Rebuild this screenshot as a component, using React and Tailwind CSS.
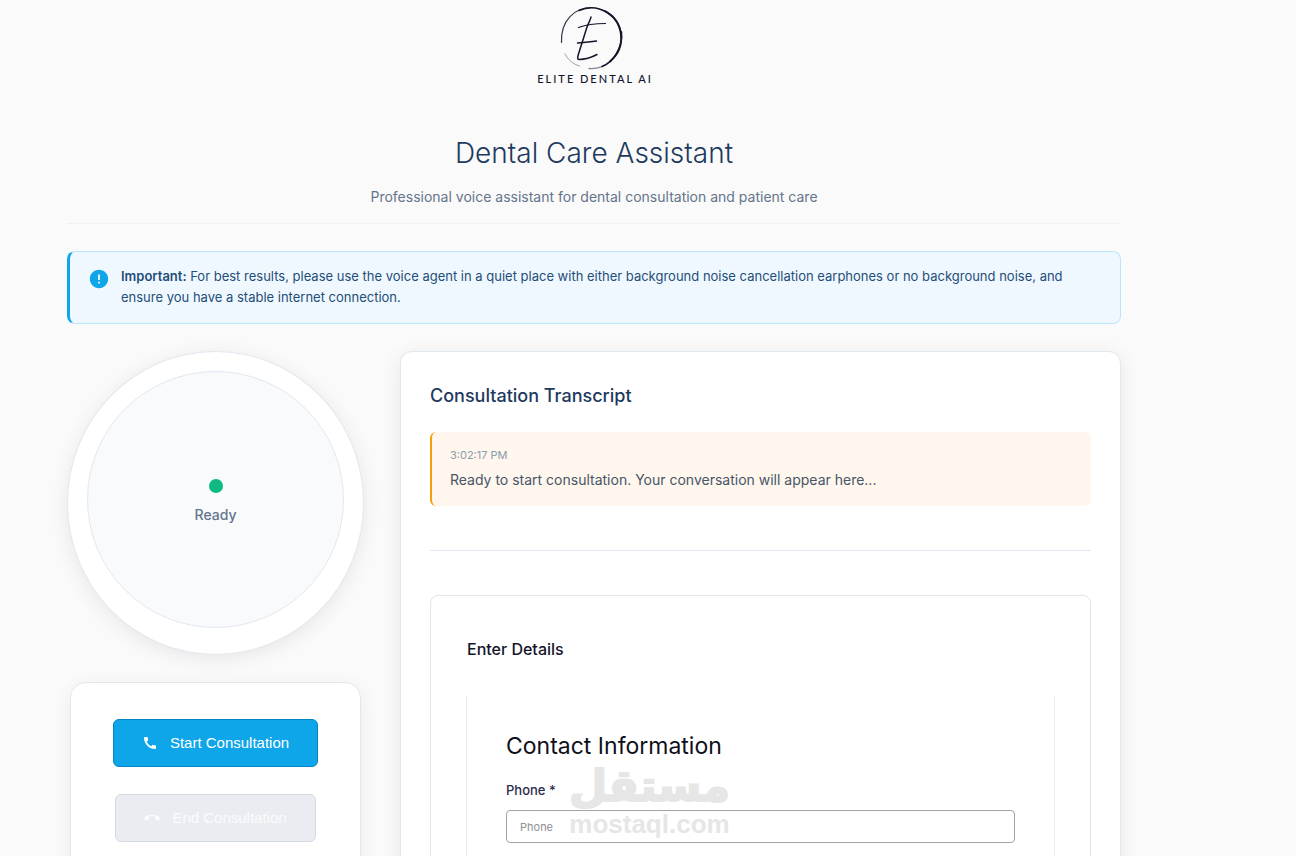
import { MdCall, MdCallEnd, MdError } from 'react-icons/md';

const messages = [
  {
    time: '3:02:17 PM',
    text: 'Ready to start consultation. Your conversation will appear here...',
  },
];

function Logo() {
  return (
    <div className="flex flex-col items-center pt-1.5">
      <svg viewBox="3 0 64 64" className="h-16 w-16 overflow-visible" fill="none" stroke="#14142b" strokeLinecap="round">
        {/* brushed ring, heavier on the right side */}
        <path d="M2.500 36.500 C1.500 14 16 1.500 33 1.500" strokeWidth="1.2" strokeOpacity="0.85" />
        <path d="M20 4.500 C40 -4 61 10 62.500 31" strokeWidth="1.5" />
        <path d="M46 5 C65 15 68 41 51 55.500" strokeWidth="1.9" />
        <path d="M62.500 26 C64 42 54 56 43 60.500" strokeWidth="1.5" />
        <path d="M52 55 C46 60.500 38 63 30 62.500" strokeWidth="1.3" strokeOpacity="0.5" />
        <path d="M6 48 C9 53.500 13.500 58 20.500 60" strokeWidth="1" strokeOpacity="0.4" />
        {/* monogram */}
        <path d="M32 11 C31.500 14 29.500 17 28 21 L19.500 48 C18.500 51.500 18 53.500 20 53.500 C25.500 53.500 31.500 52 38 48.500" strokeWidth="1.5" />
        <path d="M19.500 21.500 C27.500 18.500 35 17.500 46.500 17.500" strokeWidth="1.2" />
        <path d="M18.500 37 C24.500 36.500 30.500 36 37.500 35" strokeWidth="1.4" />
      </svg>
      <p className="ml-0.5 text-[11px] leading-[18px] font-medium tracking-[2px] text-[#14142b] font-[Lato,sans-serif]">
        ELITE DENTAL AI
      </p>
    </div>
  );
}

function Notice() {
  return (
    <div className="mt-[27px] flex gap-[11px] rounded-lg border border-l-3 border-[#bae6fd] border-l-[#0ea5e9] bg-[#f0f8ff] px-[18px] pt-3.5 pb-[15px] text-[13px] leading-[21px] text-[#1e4e79]">
      <MdError className="mt-0.5 h-[22px] w-[22px] shrink-0 text-[#0ea5e9]" />
      <p>
        <strong className="font-semibold">Important:</strong> For best results, please use the voice agent in a quiet
        place with either background noise cancellation earphones or no background noise, and ensure you have a stable
        internet connection.
      </p>
    </div>
  );
}

function StatusCircle() {
  return (
    <div className="rounded-[50%] border border-[#e2e8f0] bg-white px-[19px] pt-[19px] pb-[26px] shadow-[0_4px_20px_rgba(0,0,0,0.08)]">
      <div className="flex aspect-square flex-col items-center justify-center gap-3 rounded-full border border-[#e2e8f0] bg-[#f8fafc] pt-1">
        <span className="h-3.5 w-3.5 rounded-full bg-[#10b981]" />
        <span className="text-sm font-medium text-[#64748b]">Ready</span>
      </div>
    </div>
  );
}

function Controls() {
  return (
    <div className="mx-[3px] mt-[27px] flex h-64 flex-col items-center rounded-2xl border border-[#e2e8f0] bg-white pt-9 shadow-[0_4px_20px_rgba(0,0,0,0.06)] font-['Liberation_Sans',sans-serif]">
      <button
        type="button"
        className="flex h-12 items-center gap-3 rounded-md border border-[#0284c7] bg-[#0ea5e9] px-7 text-[15px] text-white"
      >
        <MdCall className="h-4 w-4" />
        Start Consultation
      </button>
      <button
        type="button"
        disabled
        className="mt-[27px] flex h-12 items-center gap-3 rounded-md border border-[#d5dae2] bg-[#e9edf2] px-7 text-[15px] text-[#fafbfc]"
      >
        <MdCallEnd className="h-4 w-4" />
        End Consultation
      </button>
    </div>
  );
}

function Watermark() {
  return (
    <div className="pointer-events-none absolute top-[34px] left-[63px] flex flex-col items-center text-[#e6e6e6]">
      <span
        lang="ar"
        dir="rtl"
        className="text-[44px] leading-[48px] font-bold font-['DejaVu_Sans',sans-serif] [-webkit-text-stroke:2px_#e6e6e6]"
      >
        مستقل
      </span>
      <span className="text-[26px] leading-7 font-bold font-['Liberation_Sans',sans-serif]">mostaql.com</span>
    </div>
  );
}

function ContactForm() {
  return (
    <div className="mt-[44px] h-96 rounded-lg border border-[#e5e5e5] px-[35px] pt-[39px]">
      <h3 className="pl-px text-base leading-7 font-medium text-[#14142b]">Enter Details</h3>
      <form className="mt-[33px] h-72 border-x border-[#ececec] px-[39px] pt-8">
        <div className="relative">
          <h4 className="text-[23px] leading-9 text-[#0f0f1a]">Contact Information</h4>
          <label htmlFor="phone" className="mt-4 block text-[13px] leading-5 font-medium text-[#2b2b4b]">
            Phone *
          </label>
          <input
            id="phone"
            type="tel"
            placeholder="Phone"
            className="mt-2.5 h-[33px] w-full rounded-sm border border-[#a3a3a3] bg-white px-[13px] text-[11px] placeholder:text-[#8f8f96]"
          />
          <Watermark />
        </div>
      </form>
    </div>
  );
}

function Transcript() {
  return (
    <section className="min-w-0 flex-1 rounded-xl border border-[#e2e8f0] bg-white px-[29px] pt-[30px] shadow-[0_4px_20px_rgba(0,0,0,0.08)]">
      <h2 className="text-lg leading-7 font-medium text-[#1e3a5f]">Consultation Transcript</h2>
      <div className="mt-[22px]">
        {messages.map((m) => (
          <div key={m.time} className="rounded-md border-l-2 border-[#f59e0b] bg-[#fff6ed] px-[18px] py-3.5">
            <time className="block text-[11px] leading-[18px] text-[#8a9bab]">{m.time}</time>
            <p className="mt-1 text-sm leading-6 text-[#475569]">{m.text}</p>
          </div>
        ))}
      </div>
      <hr className="mt-[44px] border-[#e2e8f0]" />
      <ContactForm />
    </section>
  );
}

export default function App() {
  return (
    <div className="h-screen overflow-hidden bg-[#fafafa] font-[Inter,sans-serif]">
      <main className="mr-[175px] ml-[67px]">
        <header className="border-b border-[#edf2f7] pb-3.5 text-center">
          <Logo />
          <h1 className="mt-[45px] text-[28px] leading-10 font-light text-[#1e3a5f]">Dental Care Assistant</h1>
          <p className="mt-3 text-sm leading-6 text-[#64748b]">
            Professional voice assistant for dental consultation and patient care
          </p>
        </header>
        <Notice />
        <div className="mt-[27px] flex gap-9">
          <aside className="w-[297px] shrink-0">
            <StatusCircle />
            <Controls />
          </aside>
          <Transcript />
        </div>
      </main>
    </div>
  );
}
